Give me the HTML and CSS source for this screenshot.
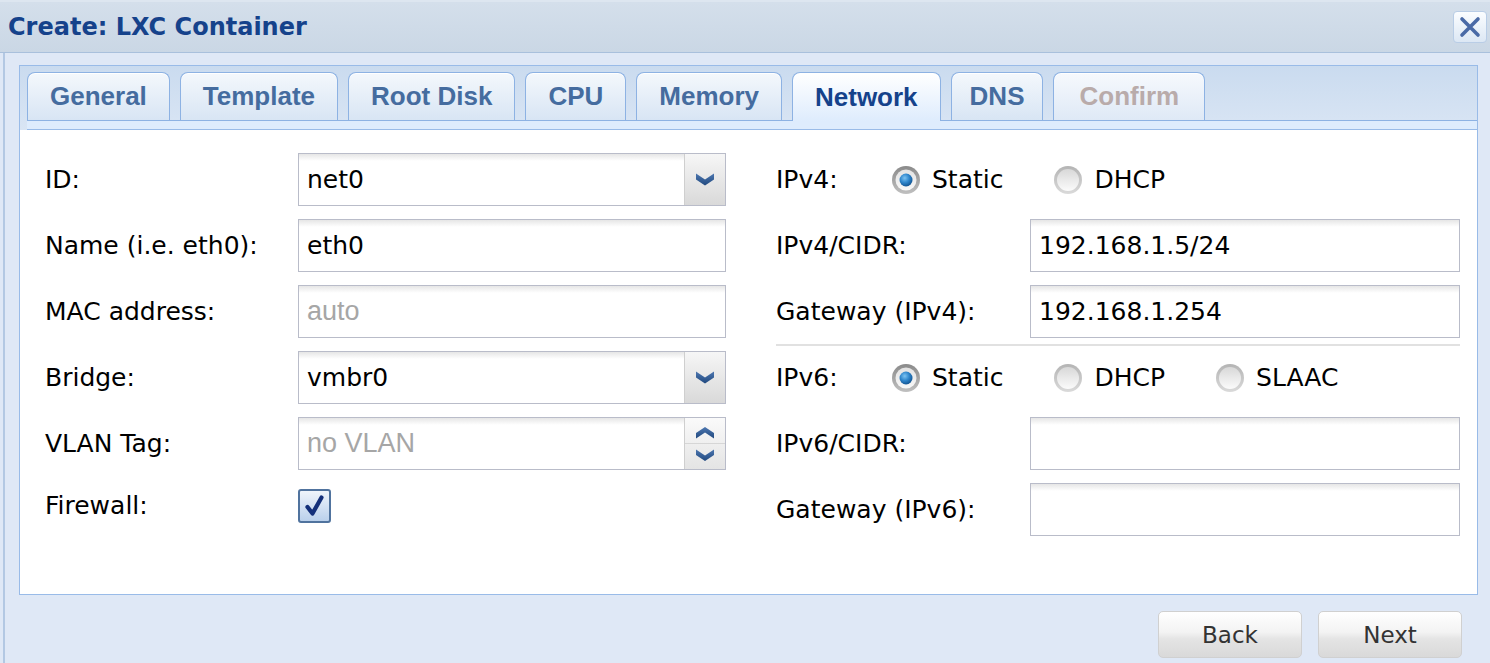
FILE: index.html
```html
<!DOCTYPE html>
<html>
<head>
<meta charset="utf-8">
<title>Create: LXC Container</title>
<link rel="stylesheet" href="styles.css">
</head>
<body>
<svg class="defs" width="0" height="0" aria-hidden="true">
  <defs>
    <linearGradient id="ringOn" x1="0" y1="0" x2="0" y2="1">
      <stop offset="0" stop-color="#8a8a8a"/>
      <stop offset="1" stop-color="#c0c0c0"/>
    </linearGradient>
    <linearGradient id="ringOff" x1="0" y1="0" x2="0" y2="1">
      <stop offset="0" stop-color="#b4b4b4"/>
      <stop offset="1" stop-color="#dadada"/>
    </linearGradient>
    <linearGradient id="innerOn" x1="0" y1="0" x2="0" y2="1">
      <stop offset="0" stop-color="#e3e3e3"/>
      <stop offset="1" stop-color="#f8f8f8"/>
    </linearGradient>
    <linearGradient id="innerOff" x1="0" y1="0" x2="0" y2="1">
      <stop offset="0" stop-color="#d8d8d8"/>
      <stop offset="1" stop-color="#fbfbfb"/>
    </linearGradient>
    <radialGradient id="dot" cx="0.4" cy="0.35" r="0.7">
      <stop offset="0" stop-color="#7cc3f2"/>
      <stop offset="0.5" stop-color="#2f86cc"/>
      <stop offset="1" stop-color="#0f4f8c"/>
    </radialGradient>
    <linearGradient id="chk" x1="0" y1="0" x2="0" y2="1">
      <stop offset="0" stop-color="#f1f6fc"/>
      <stop offset="1" stop-color="#b8cfeb"/>
    </linearGradient>
    <linearGradient id="chev" x1="0" y1="0" x2="0" y2="1">
      <stop offset="0" stop-color="#4d77b0"/>
      <stop offset="1" stop-color="#21497f"/>
    </linearGradient>
  </defs>
</svg>

<div class="window">
  <div class="win-header">
    <span class="title">Create: LXC Container</span>
    <span class="close-btn">
      <svg width="22" height="22" viewBox="0 0 22 22"><path d="M3 3 L19 19 M19 3 L3 19" stroke="#4a6aa6" stroke-width="3.6" stroke-linecap="round"/></svg>
    </span>
  </div>

  <div class="win-body">
    <div class="tabpanel">
      <div class="tabbar">
        <div class="tabs">
          <span class="tab">General</span>
          <span class="tab">Template</span>
          <span class="tab">Root Disk</span>
          <span class="tab">CPU</span>
          <span class="tab">Memory</span>
          <span class="tab active">Network</span>
          <span class="tab narrow">DNS</span>
          <span class="tab disabled">Confirm</span>
        </div>
        <div class="strip"></div>
      </div>

      <div class="panel-body">
        <div class="col col-left">
          <div class="row">
            <span class="label">ID:</span>
            <div class="field combo">
              <span class="val">net0</span>
              <span class="trigger">
                <svg width="20" height="13" viewBox="0 0 20 13"><path d="M1 0.5 L10 6.5 L19 0.5 L19 6.5 L10 12.5 L1 6.5 Z" fill="url(#chev)"/></svg>
              </span>
            </div>
          </div>
          <div class="row">
            <span class="label">Name (i.e. eth0):</span>
            <div class="field"><span class="val">eth0</span></div>
          </div>
          <div class="row">
            <span class="label">MAC address:</span>
            <div class="field"><span class="val empty">auto</span></div>
          </div>
          <div class="row">
            <span class="label">Bridge:</span>
            <div class="field combo">
              <span class="val">vmbr0</span>
              <span class="trigger">
                <svg width="20" height="13" viewBox="0 0 20 13"><path d="M1 0.5 L10 6.5 L19 0.5 L19 6.5 L10 12.5 L1 6.5 Z" fill="url(#chev)"/></svg>
              </span>
            </div>
          </div>
          <div class="row">
            <span class="label">VLAN Tag:</span>
            <div class="field combo">
              <span class="val empty">no VLAN</span>
              <span class="trigger spinner">
                <span class="spin-half up">
                  <svg width="20" height="12" viewBox="0 0 20 12"><path d="M1 11.5 L10 5.5 L19 11.5 L19 6 L10 0 L1 6 Z" fill="url(#chev)"/></svg>
                </span>
                <span class="spin-half down">
                  <svg width="20" height="12" viewBox="0 0 20 12"><path d="M1 0.5 L10 6.5 L19 0.5 L19 6 L10 12 L1 6 Z" fill="url(#chev)"/></svg>
                </span>
              </span>
            </div>
          </div>
          <div class="row row-check">
            <span class="label">Firewall:</span>
            <span class="checkbox">
              <svg width="33" height="34" viewBox="0 0 33 34">
                <rect x="1" y="1" width="31" height="32" rx="2" fill="url(#chk)" stroke="#50739e" stroke-width="2"/>
                <path d="M9.5 18 L14.5 24.5 L23.5 8.5" fill="none" stroke="#14307a" stroke-width="4.2" stroke-linecap="round" stroke-linejoin="round"/>
              </svg>
            </span>
          </div>
        </div>

        <div class="col col-right">
          <div class="row">
            <span class="label short">IPv4:</span>
            <div class="radios">
              <span class="radio">
                <svg width="30" height="30" viewBox="0 0 30 30"><circle cx="15" cy="15" r="14" fill="url(#ringOn)"/><circle cx="15" cy="15" r="10.5" fill="url(#innerOn)"/><circle cx="15" cy="15" r="6.5" fill="url(#dot)"/></svg>
                <span>Static</span>
              </span>
              <span class="radio">
                <svg width="30" height="30" viewBox="0 0 30 30"><circle cx="15" cy="15" r="14" fill="url(#ringOff)"/><circle cx="15" cy="15" r="11" fill="url(#innerOff)"/></svg>
                <span>DHCP</span>
              </span>
            </div>
          </div>
          <div class="row">
            <span class="label">IPv4/CIDR:</span>
            <div class="field"><span class="val">192.168.1.5/24</span></div>
          </div>
          <div class="row">
            <span class="label">Gateway (IPv4):</span>
            <div class="field"><span class="val">192.168.1.254</span></div>
          </div>
          <div class="separator"></div>
          <div class="row">
            <span class="label short">IPv6:</span>
            <div class="radios">
              <span class="radio">
                <svg width="30" height="30" viewBox="0 0 30 30"><circle cx="15" cy="15" r="14" fill="url(#ringOn)"/><circle cx="15" cy="15" r="10.5" fill="url(#innerOn)"/><circle cx="15" cy="15" r="6.5" fill="url(#dot)"/></svg>
                <span>Static</span>
              </span>
              <span class="radio">
                <svg width="30" height="30" viewBox="0 0 30 30"><circle cx="15" cy="15" r="14" fill="url(#ringOff)"/><circle cx="15" cy="15" r="11" fill="url(#innerOff)"/></svg>
                <span>DHCP</span>
              </span>
              <span class="radio">
                <svg width="30" height="30" viewBox="0 0 30 30"><circle cx="15" cy="15" r="14" fill="url(#ringOff)"/><circle cx="15" cy="15" r="11" fill="url(#innerOff)"/></svg>
                <span>SLAAC</span>
              </span>
            </div>
          </div>
          <div class="row">
            <span class="label">IPv6/CIDR:</span>
            <div class="field"><span class="val"></span></div>
          </div>
          <div class="row">
            <span class="label">Gateway (IPv6):</span>
            <div class="field"><span class="val"></span></div>
          </div>
        </div>
      </div>
    </div>

    <div class="toolbar">
      <span class="btn">Back</span>
      <span class="btn">Next</span>
    </div>
  </div>
</div>
</body>
</html>
```

FILE: styles.css
```css
* { box-sizing: border-box; }

html, body {
  margin: 0;
  padding: 0;
}

body {
  width: 1490px;
  height: 663px;
  overflow: hidden;
  background: #dfe8f6;
  font-family: "DejaVu Sans", Verdana, sans-serif;
  color: #000;
}

.defs {
  position: absolute;
  width: 0;
  height: 0;
}

.window {
  height: 663px;
  display: flex;
  flex-direction: column;
}

/* header */
.win-header {
  height: 53px;
  flex: none;
  display: flex;
  align-items: center;
  justify-content: space-between;
  padding: 0 3px 0 8px;
  background: linear-gradient(#d4dfeb, #cad7e5);
  border-top: 2px solid #dde6f0;
  border-bottom: 1px solid #a9c0dc;
}

.title {
  font-family: "DejaVu Sans", Verdana, sans-serif;
  font-weight: bold;
  font-size: 24px;
  color: #15428b;
}

.close-btn {
  width: 34px;
  height: 32px;
  display: flex;
  align-items: center;
  justify-content: center;
  border: 1px solid #b9cde6;
  border-radius: 4px;
  background: linear-gradient(#fbfdff, #dce7f4);
}

/* body */
.win-body {
  flex: 1;
  margin-left: 3px;
  border-left: 2px solid #b3c8e3;
  padding: 12px 12px 0 14px;
  display: flex;
  flex-direction: column;
}

.tabbar {
  border: 1px solid #99bbe8;
  border-bottom: none;
  background: linear-gradient(#cadbef, #d9e5f4);
  padding: 6px 0 0 7px;
}

.tabs {
  display: flex;
  gap: 10px;
  height: 48px;
  align-items: flex-end;
}

.tab {
  height: 48px;
  display: flex;
  align-items: center;
  padding: 0 22px;
  border: 1px solid #8db2e3;
  border-bottom: none;
  border-radius: 8px 8px 0 0;
  background: linear-gradient(#f4f8fc, #d8e5f4);
  box-shadow: inset 0 1px 0 #fff;
  font-family: "Liberation Sans", Arial, sans-serif;
  font-weight: bold;
  font-size: 26px;
  color: #456c9f;
}

.tab.narrow {
  padding: 0 18px;
}

.tab.active {
  height: 49px;
  margin-bottom: -1px;
  position: relative;
  z-index: 1;
  background: linear-gradient(#ffffff, #deecfd);
  color: #15428b;
}

.tab.disabled {
  padding: 0 25px;
  color: #b9abaa;
  background: linear-gradient(#f6f9fd, #dfe9f6);
}

.strip {
  height: 10px;
  border-top: 1px solid #8db2e3;
  border-bottom: 1px solid #99bbe8;
  background: #deecfd;
}

.panel-body {
  height: 465px;
  background: #fff;
  border: 1px solid #99bbe8;
  border-top: none;
  padding: 23px 17px 0 25px;
  display: flex;
  gap: 50px;
}

.col {
  display: flex;
  flex-direction: column;
}

.col-left { width: 681px; }
.col-right { width: 684px; }

.row {
  height: 53px;
  margin-bottom: 13px;
  display: flex;
  align-items: center;
  flex: none;
}

.row-check {
  height: 45px;
}

.label {
  width: 253px;
  flex: none;
  font-size: 25px;
  white-space: nowrap;
}

.col-right .label { width: 254px; }
.col-right .label.short { width: 115px; }

.field {
  flex: 1;
  height: 53px;
  display: flex;
  align-items: stretch;
  border: 1px solid #b9bcc9;
  background: linear-gradient(#e6e6e6, #ffffff 7px);
}

.val {
  flex: 1;
  display: flex;
  align-items: center;
  padding-left: 8px;
  font-size: 25px;
  color: #000;
  white-space: nowrap;
}

.val.empty {
  font-family: "Liberation Sans", Arial, sans-serif;
  font-size: 27px;
  color: #a6a6a6;
}

.trigger {
  width: 41px;
  flex: none;
  display: flex;
  align-items: center;
  justify-content: center;
  border-left: 1px solid #cfcfcf;
  background: linear-gradient(#f6f6f6, #d9d9d9);
}

.trigger.spinner {
  flex-direction: column;
  align-items: stretch;
  background: linear-gradient(#fafafa, #e4e4e4);
}

.spin-half {
  flex: 1;
  display: flex;
  justify-content: center;
}

.spin-half.up { align-items: flex-end; padding-bottom: 4px; }
.spin-half.down { align-items: flex-start; padding-top: 5px; }

.spin-half + .spin-half {
  border-top: 1px solid #d6d6d6;
}

.checkbox {
  display: flex;
  align-items: center;
}

.separator {
  height: 2px;
  margin: -7px 0 5px 0;
  background: #e1e1e1;
  flex: none;
}

.radios {
  display: flex;
  align-items: center;
  gap: 50px;
}

.radio {
  display: flex;
  align-items: center;
  gap: 11px;
  font-size: 25px;
}

.radio svg { flex: none; }

/* toolbar */
.toolbar {
  display: flex;
  justify-content: flex-end;
  gap: 16px;
  padding: 16px 16px 0 0;
}

.btn {
  width: 144px;
  height: 47px;
  display: flex;
  align-items: center;
  justify-content: center;
  border: 1px solid #d0d0d0;
  border-radius: 5px;
  background: linear-gradient(#ffffff, #f3f3f3 45%, #e4e4e4 60%, #d9d9d9);
  font-size: 23px;
  color: #333;
}
```
